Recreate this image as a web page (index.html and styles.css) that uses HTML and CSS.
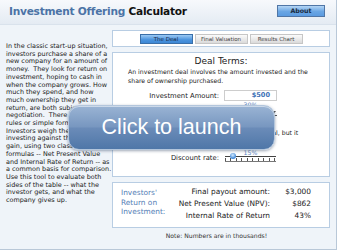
FILE: index.html
```html
<!DOCTYPE html>
<html>
<head>
<meta charset="utf-8">
<link rel="stylesheet" href="styles.css">
</head>
<body>
<div class="app">
  <header class="header">
    <h1 class="title"><span class="blue">Investment Offering</span> Calculator</h1>
    <button class="about">About</button>
  </header>
  <div class="main">
    <div class="intro">In the classic start-up situation,<br>investors purchase a share of a<br>new company for an amount of<br>money.&nbsp; They look for return on<br>investment, hoping to cash in<br>when the company grows.&nbsp;How<br>much they spend, and how<br>much ownership they get in<br>return, are both subject to<br>negotiation.&nbsp; There are no<br>rules or simple formulas.<br>Investors weigh the risk of<br>investing against the potential<br>gain, using two classic financial<br>formulas -- Net Present Value<br>and Internal Rate of Return -- as<br>a common basis for comparison.<br>Use this tool to evaluate both<br>sides of the table -- what the<br>investor gets, and what the<br>company gives up.</div>
    <div class="right">
      <div class="tabs">
        <span class="tab active">The Deal</span>
        <span class="tab">Final Valuation</span>
        <span class="tab">Results Chart</span>
      </div>
      <div class="deal">
        <div class="deal-title">Deal Terms:</div>
        <p class="deal-desc">An investment deal involves the amount invested and the<br>share of ownership purchased.</p>
        <div class="row">
          <span class="lbl">Investment Amount:</span>
          <span class="input">$500</span>
        </div>
        <div class="row r2">
          <span class="lbl">Share purchased:</span>
          <div class="ctl">
            <span class="pct">30%</span>
            <div class="slider"><span class="tri"></span></div>
          </div>
        </div>
        <p class="deal-desc2">The share is often set to be roughly proportional, but it<br>may be adjusted for risk.</p>
        <div class="row r3">
          <span class="lbl">Discount rate:</span>
          <div class="ctl">
            <span class="pct">15%</span>
            <div class="slider ticks"><span class="knob"></span></div>
          </div>
        </div>
      </div>
      <div class="results">
        <div class="roi">Investors'<br>Return on<br>Investment:</div>
        <div class="res-grid">
          <span class="rl">Final payout amount:</span><span class="rv">$3,000</span>
          <span class="rl">Net Present Value (NPV):</span><span class="rv">$862</span>
          <span class="rl">Internal Rate of Return</span><span class="rv">43%</span>
        </div>
      </div>
      <div class="note">Note: Numbers are in thousands!</div>
    </div>
  </div>
  <div class="launch">Click to launch</div>
</div>
</body>
</html>
```
FILE: styles.css
```css
* { box-sizing: border-box; }
html, body { margin: 0; padding: 0; }
body { width: 338px; height: 251px; overflow: hidden; background: #fff; font-family: "DejaVu Sans", Verdana, sans-serif; }
.app { position: relative; width: 337px; height: 250px; border-right: 1px solid #b9c8d8; border-bottom: 1px solid #b9c8d8; background: #eff4f9; }
.header { height: 25px; display: flex; align-items: flex-start; justify-content: space-between; padding: 0 11px 0 9px; background: linear-gradient(#f7f9fc, #e4ebf3); border-bottom: 1px solid #d9e2ec; }
.title { margin: 4px 0 0; font-size: 10.6px; line-height: 14px; letter-spacing: -0.25px; font-weight: bold; color: #111; }
.title .blue { color: #4b73a6; }
.about { margin-top: 5px; width: 48px; height: 12px; padding: 0; font-family: "DejaVu Sans", sans-serif; font-size: 6.3px; line-height: 10px; font-weight: bold; color: #1a2a40; border: 1px solid #5076a6; background: linear-gradient(#b5d6f5, #6aa6e4 55%, #5b9be0); }
.main { display: flex; }
.intro { width: 112px; padding: 18px 0 0 6px; font-size: 6.45px; line-height: 7.7px; color: #222; white-space: nowrap; }
.right { width: 218px; padding-top: 5px; display: flex; flex-direction: column; }
.tabs { height: 17px; background: #fff; border: 1px solid #b8cde3; display: flex; justify-content: center; align-items: center; gap: 2px; }
.tab { width: 53px; height: 10px; font-size: 5.5px; line-height: 8px; text-align: center; color: #444; background: linear-gradient(#fbfbfb, #dadada); border: 1px solid #c6c6c6; }
.tab.active { background: linear-gradient(#9ccaf4, #4a93dd 60%, #3d88d6); border-color: #3a6fa8; color: #1c2c48; }
.deal { margin-top: 5px; height: 125px; background: #fff; border: 1px solid #b8cde3; padding: 2px 6px 0; }
.deal-title { text-align: center; font-size: 9px; line-height: 12px; color: #222; }
.deal-desc { margin: 1px 0 0 9px; font-size: 6.2px; line-height: 8.5px; color: #222; }
.row { display: flex; align-items: center; gap: 5px; margin-top: 5px; }
.lbl { width: 100px; flex: none; text-align: right; font-size: 6.8px; line-height: 8px; color: #222; }
.input { width: 53px; height: 11px; border: 1px solid #cdcdcd; text-align: right; padding-right: 6px; font-size: 6.6px; line-height: 9px; font-weight: bold; color: #3c6fb5; background: #fff; }
.ctl { width: 53px; position: relative; }
.pct { display: block; text-align: center; font-size: 6.2px; color: #5a86c2; line-height: 7px; }
.r2 { margin-top: 0; align-items: flex-end; }
.slider { height: 8px; position: relative; }
.r2 .slider { border-bottom: 1px solid #555; }
.tri { position: absolute; right: 1px; top: 3px; border-left: 3px solid transparent; border-right: 3px solid transparent; border-top: 4px solid #555; }
.deal-desc2 { margin: 12.5px 0 0 9px; font-size: 6.2px; line-height: 8.5px; color: #222; }
.r3 { margin-top: 3.5px; align-items: flex-end; }
.ticks { height: 6px; margin: 0 1px; border-top: 1px solid #444; background: repeating-linear-gradient(90deg, #555 0 1px, transparent 1px 5.5px) 0 1px / 100% 3px no-repeat; border-bottom: 1px solid #777; }
.knob { position: absolute; left: 5px; top: -4px; width: 6px; height: 6px; border-radius: 50%; background: radial-gradient(circle at 45% 35%, #d6ecff, #3b84d6 70%); }
.results { margin-top: 5px; height: 46px; background: #fff; border: 1px solid #b8cde3; display: flex; padding: 3px 0 0 8px; }
.roi { width: 50px; margin-top: 2px; font-size: 7.4px; line-height: 9.6px; color: #5580b6; }
.res-grid { display: grid; grid-template-columns: 99px 41px; align-content: start; font-size: 7.4px; line-height: 12px; color: #222; }
.rl { text-align: right; }
.rv { text-align: right; }
.note { text-align: center; font-size: 6.1px; line-height: 8px; color: #333; margin-top: 4px; padding-right: 9px; }
.launch { position: absolute; left: 68px; top: 105px; width: 207px; height: 45px; border-radius: 11px; border: 1px solid #b3c6dc; background: linear-gradient(#9ab4d4, #7897c0 48%, #6a8bb8 52%, #4f77a8); box-shadow: 0 1px 3px rgba(40,60,90,0.45), inset 0 1px 0 rgba(255,255,255,0.5); color: #fff; font-family: "Liberation Sans", Arial, sans-serif; font-size: 21.5px; display: flex; align-items: center; justify-content: center; }
```
